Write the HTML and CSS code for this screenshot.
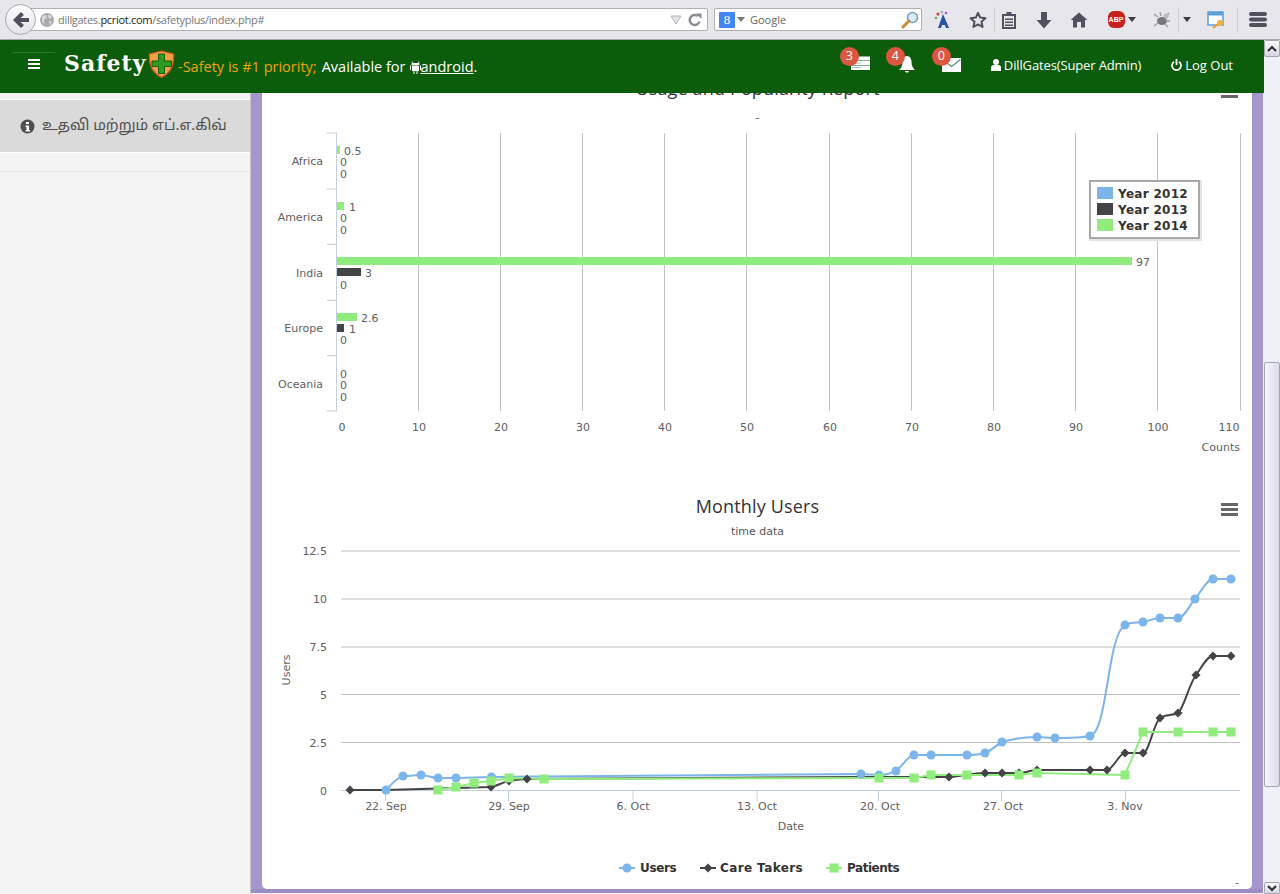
FILE: index.html
```html
<!DOCTYPE html>
<html lang="en">
<head>
<meta charset="utf-8">
<title>Safety Plus</title>
<link rel="stylesheet" href="styles.css">
</head>
<body>
<div class="toolbar">
  <div class="back">
    <svg width="20" height="20" viewBox="0 0 20 20"><path d="M10 2 L2 10 L10 18 L13 15 L9.5 12 H18 V8 H9.5 L13 5 Z" fill="#50505f"/></svg>
  </div>
  <div class="urlbar">
    <svg class="globe" width="16" height="16" viewBox="0 0 16 16"><circle cx="8" cy="8" r="7" fill="#a9a9ae"/><path d="M3 4 L7 3 L8 6 L5 8 L6 12 L3 10 Z M10 2 L13 5 L11 7 L9 5 Z M10 9 L13 9 L11 14 Z" fill="#d8d8dc"/></svg>
    <span class="url"><span class="url-dim">dillgates.</span>pcriot.com<span class="url-dim">/safetyplus/index.php#</span></span>
    <svg class="url-drop" width="12" height="10" viewBox="0 0 12 10"><path d="M1 1 H11 L6 9 Z" fill="#e4e4e8" stroke="#b4b4ba"/></svg>
    <svg class="url-reload" width="14" height="14" viewBox="0 0 14 14"><path d="M11.5 8.5 A5 5 0 1 1 10 3.2" fill="none" stroke="#8a8a94" stroke-width="2.4"/><path d="M8 0.5 L13.5 0.5 L13.5 6 Z" fill="#8a8a94"/></svg>
  </div>
  <div class="searchbar">
    <span class="g-icon">8</span>
    <svg width="8" height="5" viewBox="0 0 8 5"><path d="M0 0 H8 L4 5 Z" fill="#777"/></svg>
    <span class="search-text">Google</span>
    <svg class="lens" width="18" height="18" viewBox="0 0 18 18"><circle cx="11.5" cy="6.5" r="5" fill="#d9eefc" stroke="#7d9fbc" stroke-width="1.6"/><path d="M8 10 L2 16" stroke="#c98a3a" stroke-width="3" stroke-linecap="round"/></svg>
  </div>
  <div class="tools">
    <div class="tool"><svg width="20" height="20" viewBox="0 0 20 20"><path d="M10 4 L5 18 H8 L9 15 H12 L13 18 H16 Z" fill="#2a4fa8"/><circle cx="5" cy="4" r="1.6" fill="#c44"/><circle cx="3" cy="8" r="1.3" fill="#6a6"/><circle cx="9" cy="2" r="1.3" fill="#aaa"/><circle cx="13" cy="3" r="1.3" fill="#a5c"/></svg></div>
    <div class="tool"><svg width="18" height="18" viewBox="0 0 18 18"><path d="M9 1.8 L11.2 6.6 L16.4 7.2 L12.5 10.8 L13.6 16 L9 13.4 L4.4 16 L5.5 10.8 L1.6 7.2 L6.8 6.6 Z" fill="none" stroke="#50505f" stroke-width="2" stroke-linejoin="round"/></svg></div>
    <div class="tool-sep"></div>
    <div class="tool"><svg width="16" height="18" viewBox="0 0 16 18"><path d="M2 4 H14 V17 H2 Z" fill="none" stroke="#50505f" stroke-width="2"/><path d="M5.5 1 H10.5 V5 H5.5 Z M4 7.5 H12 V9 H4 Z M4 10.5 H12 V12 H4 Z M4 13.500 H12 V15 H4 Z" fill="#50505f"/></svg></div>
    <div class="tool"><svg width="16" height="18" viewBox="0 0 16 18"><path d="M5 1 H11 V9 H15.500 L8 17.500 L0.500 9 H5 Z" fill="#50505f"/></svg></div>
    <div class="tool"><svg width="18" height="16" viewBox="0 0 18 16"><path d="M9 0.500 L17.500 8 H15 V15.500 H11 V10 H7 V15.500 H3 V8 H0.500 Z" fill="#50505f"/></svg></div>
    <div class="tool tool-abp"><span class="abp">ABP</span><svg width="8" height="5" viewBox="0 0 8 5"><path d="M0 0 H8 L4 5 Z" fill="#3c3c44"/></svg></div>
    <div class="tool"><svg width="18" height="16" viewBox="0 0 18 16"><ellipse cx="9" cy="9" rx="5" ry="4" fill="#77777c"/><path d="M5 5 L1 2 M8 4 L7 0 M12 5 L16 1 M13 9 H17 M5 11 L1 14 M12 12 L15 15" stroke="#9c9ca2" stroke-width="1.400"/><circle cx="13" cy="4" r="2.500" fill="#bbb"/></svg></div>
    <div class="tool-gap"></div>
    <div class="tool-sep"></div>
    <div class="tool"><svg width="8" height="5" viewBox="0 0 8 5"><path d="M0 0 H8 L4 5 Z" fill="#3c3c44"/></svg></div>
    <div class="tool"><svg width="18" height="18" viewBox="0 0 18 18"><rect x="1" y="1" width="15" height="13" fill="#fff" stroke="#5a9fd8" stroke-width="1.500"/><rect x="1" y="1" width="15" height="3.500" fill="#5a9fd8"/><circle cx="13" cy="12" r="3" fill="#eeb23c"/><path d="M11 13 L6 17" stroke="#e2a02c" stroke-width="2"/></svg></div>
    <div class="tool-sep"></div>
    <div class="tool"><svg width="18" height="15" viewBox="0 0 18 15"><path d="M2 0 H16 Q18 0 18 2 Q18 4 16 4 H2 Q0 4 0 2 Q0 0 2 0 Z M2 5.500 H16 Q18 5.500 18 7.500 Q18 9.500 16 9.500 H2 Q0 9.500 0 7.500 Q0 5.500 2 5.500 Z M2 11 H16 Q18 11 18 13 Q18 15 16 15 H2 Q0 15 0 13 Q0 11 2 11 Z" fill="#50505f"/></svg></div>
  </div>
</div>

<div class="viewport">
  <div class="app">
    <header class="appbar">
      <button class="nav-toggle" type="button" aria-label="Menu"><span></span><span></span><span></span></button>
      <span class="brand">Safety</span>
      <svg class="shield" width="27" height="28" viewBox="0 0 27 28"><path d="M13.500 1 L25.500 4 C26.500 15 22 23 13.500 27.500 C5 23 0.500 15 1.500 4 Z" fill="#f0a03c" stroke="#d8502a" stroke-width="1.200"/><path d="M10.500 4 H16.500 V11 H23.500 V16.500 H16.500 V23.500 H10.500 V16.500 H4 V11 H10.500 Z" fill="#2f9a1e" stroke="#155f12"/></svg>
      <span class="tagline">-Safety is #1 priority;</span>
      <span class="avail">Available for</span>
      <svg class="android" width="11" height="14" viewBox="0 0 11 14"><path d="M2 1 L3 3 H8 L9 1 L9.500 5 H1.500 Z M0 5.500 H1 V10 H0 Z M10 5.500 H11 V10 H10 Z M2 5.500 H9 V11 H7.500 V14 H6.500 V11 H4.500 V14 H3.500 V11 H2 Z" fill="#fff"/></svg>
      <a class="android-link" href="#">android</a><span class="avail-dot">.</span>
      <nav class="app-actions">
        <div class="notice notice-tasks">
          <span class="badge">3</span>
          <svg width="19" height="14" viewBox="0 0 19 14"><path d="M0 9.500 H19 V14 H0 Z M1 5 H19 V9 H1 Z M3 0.500 H19 V4.500 H3 Z" fill="#fff"/><path d="M1 11.500 H10 M2 7 H10" stroke="#a9c4dc"/></svg>
        </div>
        <div class="notice notice-bell">
          <span class="badge">4</span>
          <svg width="18" height="18" viewBox="0 0 18 18"><path d="M9 1 C12 1 13.500 4 13.500 7 C13.500 11 15 13 17 15 H1 C3 13 4.500 11 4.500 7 C4.500 4 6 1 9 1 Z M7 16 H11 C11 18 7 18 7 16 Z" fill="#fff"/></svg>
        </div>
        <div class="notice notice-mail">
          <span class="badge">0</span>
          <svg width="19" height="14" viewBox="0 0 19 14"><path d="M0 0 H19 V14 H0 Z" fill="#fff"/><path d="M0.500 1.500 L9.500 8.500 L18.500 1.500" fill="none" stroke="#5d8f6a" stroke-width="1.200"/></svg>
        </div>
        <span class="account">
          <svg width="10" height="12" viewBox="0 0 10 12"><circle cx="5" cy="3" r="3" fill="#fff"/><path d="M0 12 V8.500 Q0 6 2.500 6 H7.500 Q10 6 10 8.500 V12 Z" fill="#fff"/></svg>
          DillGates(Super Admin)
        </span>
        <span class="logout">
          <svg width="11" height="12" viewBox="0 0 11 12"><path d="M3 2.800 A4.500 4.500 0 1 0 8 2.800" fill="none" stroke="#fff" stroke-width="1.800"/><path d="M5.500 0 V6" stroke="#fff" stroke-width="1.800"/></svg>
          Log Out
        </span>
      </nav>
    </header>

    <div class="workspace">
      <aside class="sidebar">
        <div class="side-item">
          <svg width="15" height="15" viewBox="0 0 15 15"><circle cx="7.500" cy="7.500" r="7" fill="#4f4f4f"/><path d="M6 3 H9 V5 H6 Z M5.500 6.500 H9 V11 H10 V12.500 H5.500 V11 H6.500 V8 H5.500 Z" fill="#fff"/></svg>
          <span>உதவி மற்றும் எப்.எ.கிவ்</span>
        </div>
        <div class="side-rest"></div>
      </aside>

      <main class="panel">
        <div class="card">
          <svg class="chart chart-bar" viewBox="262 93 990 397" width="990" height="397">
            <text class="c-title" x="757.500" y="95">Usage and Popularity Report</text>
            <text class="c-sub" x="757.500" y="121">-</text>
            <path class="c-menu" d="M1221 95 H1238 V98 H1221 Z"/>
            <path class="c-grid" d="M418.500 133 V411 M500.500 133 V411 M582.500 133 V411 M664.500 133 V411 M746.500 133 V411 M829.500 133 V411 M911.500 133 V411 M993.500 133 V411 M1075.500 133 V411 M1157.500 133 V411 M1240.500 133 V411"/>
            <path class="c-axis" d="M336.500 133 V411 M327 133 H337 M327 189 H337 M327 244.500 H337 M327 300.500 H337 M327 355.500 H337 M327 411 H337"/>
            <rect class="s-green" x="337" y="146" width="3" height="8"/>
            <rect class="s-green" x="337" y="202" width="7" height="8"/>
            <rect class="s-green" x="337" y="257" width="795" height="8"/>
            <rect class="s-dark" x="337" y="268" width="24" height="8"/>
            <rect class="s-green" x="337" y="313" width="20" height="8"/>
            <rect class="s-dark" x="337" y="324" width="7" height="8"/>
            <g class="c-label">
              <text x="344" y="155">0.5</text><text x="340" y="166">0</text><text x="340" y="178">0</text>
              <text x="349" y="211">1</text><text x="340" y="222">0</text><text x="340" y="234">0</text>
              <text x="1136" y="266">97</text><text x="365" y="277">3</text><text x="340" y="289">0</text>
              <text x="361" y="322">2.6</text><text x="349" y="333">1</text><text x="340" y="344">0</text>
              <text x="340" y="378">0</text><text x="340" y="389">0</text><text x="340" y="401">0</text>
            </g>
            <g class="c-label c-end">
              <text x="323" y="165">Africa</text><text x="323" y="221">America</text><text x="323" y="277">India</text><text x="323" y="332">Europe</text><text x="323" y="388">Oceania</text>
              <text x="1240" y="451">Counts</text>
            </g>
            <g class="c-label c-mid">
              <text x="342" y="431">0</text><text x="419" y="431">10</text><text x="501" y="431">20</text><text x="583" y="431">30</text><text x="665" y="431">40</text><text x="747" y="431">50</text><text x="830" y="431">60</text><text x="912" y="431">70</text><text x="994" y="431">80</text><text x="1076" y="431">90</text><text x="1158" y="431">100</text><text x="1229" y="431">110</text>
            </g>
            <rect class="lg-shadow" x="1089" y="180" width="113" height="61"/>
            <rect class="lg-box" x="1090" y="181" width="109" height="57"/>
            <rect class="s-blue" x="1097" y="187" width="16" height="12"/>
            <rect class="s-dark" x="1097" y="203" width="16" height="12"/>
            <rect class="s-green" x="1097" y="219" width="16" height="12"/>
            <g class="c-legend">
              <text x="1118" y="198">Year 2012</text><text x="1118" y="214">Year 2013</text><text x="1118" y="230">Year 2014</text>
            </g>
          </svg>
          <svg class="chart chart-line" viewBox="262 490 990 399" width="990" height="399">
            <defs>
              <circle id="m-c" r="4.500" class="s-blue"/>
              <path id="m-d" d="M0 -4.500 L4.500 0 L0 4.500 L-4.500 0 Z" class="s-dark"/>
              <rect id="m-s" x="-4.500" y="-4.500" width="9" height="9" class="s-green"/>
            </defs>
            <text class="c-title" x="757.500" y="513">Monthly Users</text>
            <text class="c-sub" x="757.500" y="535">time data</text>
            <path class="c-menu" d="M1221 503 H1238 V506 H1221 Z M1221 508 H1238 V511 H1221 Z M1221 513 H1238 V516 H1221 Z"/>
            <path class="c-grid" d="M341 551 H1240 M341 599 H1240 M341 647 H1240 M341 694.500 H1240 M341 742.500 H1240"/>
            <path class="c-axis" d="M341 790.500 H1240 M385.500 791 V801 M508.500 791 V801 M633 791 V801 M757 791 V801 M878.500 791 V801 M1001.500 791 V801 M1125.500 791 V801"/>
            <g class="c-label c-end">
              <text x="327" y="555">12.5</text><text x="327" y="603">10</text><text x="327" y="651">7.5</text><text x="327" y="699">5</text><text x="327" y="747">2.5</text><text x="327" y="795">0</text>
            </g>
            <text class="c-label c-mid" transform="translate(290 670) rotate(-90)">Users</text>
            <g class="c-label c-mid">
              <text x="386" y="810">22. Sep</text><text x="509" y="810">29. Sep</text><text x="633" y="810">6. Oct</text><text x="757" y="810">13. Oct</text><text x="880" y="810">20. Oct</text><text x="1003" y="810">27. Oct</text><text x="1125" y="810">3. Nov</text>
              <text x="791" y="830">Date</text>
            </g>
            <path class="l-blue" d="M386 790 C392 784 397 777 403 776.500 C409 776 415 775 421 775 C427 775 432 778 438 778 L456 778 L491.500 777 L861 774 L879 775 C885 775 890 774 896 771 C902 767 908 755 914 755 L967 755 C973 755 979 755 985 753 C991 751 996 745 1002 742 C1012 739 1027 737 1037 737 C1043 737 1049 738 1055 738 C1065 738 1080 738 1090 736 C1108 732 1107 635 1125 625 C1131 622 1137 623 1143 622 C1149 621 1154 618 1160 618 L1178 618 C1184 618 1189 606 1195 599 C1201 592 1207 579 1213 579 L1231 579"/>
            <path class="l-dark" d="M350 790 L386 790 L491 787 C497 786 503 782 509 781 C515 780 521 779 527 779 L861 777 L949 777 C960 776 975 773 985 773 L1019 773 C1025 773 1031 770 1037 770 L1107 770 C1113 770 1119 753 1125 753 L1143 753 C1149 753 1154 722 1160 718 C1166 714 1172 716 1178 713 C1184 708 1189 684 1196 675 C1202 667 1207 656 1213 656 L1231 656"/>
            <path class="l-green" d="M438 790 L456 787 L474 783 L491 781 L509 778 L544 779 L879 778 L914 778 L931 775 L967 775 L1019 775 L1037 773 L1125 775 L1143 732 L1231 732"/>
            <g>
              <use href="#m-c" x="386" y="790"/><use href="#m-c" x="403" y="776"/><use href="#m-c" x="421" y="775"/><use href="#m-c" x="438" y="778"/><use href="#m-c" x="456" y="778"/><use href="#m-c" x="491.500" y="777"/><use href="#m-c" x="861" y="774"/><use href="#m-c" x="879" y="775"/><use href="#m-c" x="896" y="771"/><use href="#m-c" x="914" y="755"/><use href="#m-c" x="931" y="755"/><use href="#m-c" x="967" y="755"/><use href="#m-c" x="985" y="753"/><use href="#m-c" x="1002" y="742"/><use href="#m-c" x="1037" y="737"/><use href="#m-c" x="1055" y="738"/><use href="#m-c" x="1090" y="736"/><use href="#m-c" x="1125" y="625"/><use href="#m-c" x="1143" y="622"/><use href="#m-c" x="1160" y="618"/><use href="#m-c" x="1178" y="618"/><use href="#m-c" x="1195" y="599"/><use href="#m-c" x="1213" y="579"/><use href="#m-c" x="1231" y="579"/>
            </g>
            <g>
              <use href="#m-d" x="350" y="790"/><use href="#m-d" x="491" y="787"/><use href="#m-d" x="509" y="781"/><use href="#m-d" x="527" y="779"/><use href="#m-d" x="949" y="777"/><use href="#m-d" x="985" y="773"/><use href="#m-d" x="1002" y="773"/><use href="#m-d" x="1019" y="773"/><use href="#m-d" x="1037" y="770"/><use href="#m-d" x="1090" y="770"/><use href="#m-d" x="1107" y="770"/><use href="#m-d" x="1125" y="753"/><use href="#m-d" x="1143" y="753"/><use href="#m-d" x="1160" y="718"/><use href="#m-d" x="1178" y="713"/><use href="#m-d" x="1196" y="675"/><use href="#m-d" x="1213" y="656"/><use href="#m-d" x="1231" y="656"/>
            </g>
            <g>
              <use href="#m-s" x="438" y="790"/><use href="#m-s" x="456" y="787"/><use href="#m-s" x="474" y="783"/><use href="#m-s" x="491" y="781"/><use href="#m-s" x="509" y="778"/><use href="#m-s" x="544" y="779"/><use href="#m-s" x="879" y="778"/><use href="#m-s" x="914" y="778"/><use href="#m-s" x="931" y="775"/><use href="#m-s" x="967" y="775"/><use href="#m-s" x="1019" y="775"/><use href="#m-s" x="1037" y="773"/><use href="#m-s" x="1125" y="775"/><use href="#m-s" x="1143" y="732"/><use href="#m-s" x="1178" y="732"/><use href="#m-s" x="1213" y="732"/><use href="#m-s" x="1231" y="732"/>
            </g>
            <path class="l-blue" d="M619 868 H635"/><use href="#m-c" x="627" y="868"/>
            <path class="l-dark" d="M700 868 H716"/><use href="#m-d" x="708" y="868"/>
            <path class="l-green" d="M826 868 H842"/><use href="#m-s" x="834" y="868"/>
            <g class="c-legend">
              <text x="640" y="872" textLength="37">Users</text><text x="720" y="872" textLength="83">Care Takers</text><text x="847" y="872" textLength="53">Patients</text>
            </g>
            <text class="c-label c-mid" x="1237" y="886">-</text>
          </svg>
        </div>
      </main>
    </div>
  </div>

  <div class="scrollbar">
    <div class="sb-btn"><svg width="10" height="7" viewBox="0 0 10 7"><path d="M1 6 L5 2 L9 6" fill="none" stroke="#333" stroke-width="2.200"/></svg></div>
    <div class="sb-track-top"></div>
    <div class="sb-thumb"></div>
    <div class="sb-track-bottom"></div>
    <div class="sb-btn sb-btn-down"><svg width="10" height="7" viewBox="0 0 10 7"><path d="M1 1 L5 5 L9 1" fill="none" stroke="#333" stroke-width="2.200"/></svg></div>
  </div>
</div>
</body>
</html>
```

FILE: styles.css
```css
* { box-sizing: border-box; }
html, body { margin: 0; height: 100%; overflow: hidden; }
body { display: flex; flex-direction: column; height: 894px; font-family: "Open Sans", "Liberation Sans", sans-serif; background: #fff; }

/* browser chrome */
.toolbar { display: flex; align-items: center; height: 40px; flex: none; background: #e6e6eb; border-bottom: 1px solid #a9a9ad; padding-left: 5px; }
.back { position: relative; z-index: 1; width: 31px; height: 31px; flex: none; display: flex; align-items: center; justify-content: center; border-radius: 50%; background: linear-gradient(#fdfdfd, #e4e4ea); border: 1px solid #a8a8b4; }
.urlbar { display: flex; align-items: center; width: 684px; height: 23px; margin-left: -12px; padding-left: 14px; background: #fff; border: 1px solid #b0b0b4; border-radius: 0 2px 2px 0; flex: none; }
.globe { flex: none; }
.url { margin-left: 3px; font-size: 11px; color: #222; letter-spacing: -0.300px; flex: 1; }
.url-dim { color: #777; }
.url-drop { margin-right: 6px; }
.url-reload { margin-right: 5px; }
.searchbar { display: flex; align-items: center; width: 208px; height: 23px; margin-left: 6px; padding-left: 4px; background: #fff; border: 1px solid #b0b0b4; border-radius: 2px; flex: none; }
.g-icon { width: 16px; height: 16px; margin-right: 2px; background: #4285f4; color: #fff; font: 13px/16px "Liberation Serif", serif; text-align: center; border-radius: 1px; }
.search-text { margin-left: 5px; flex: 1; font-size: 11px; color: #666; }
.lens { margin-right: 2px; }
.tools { display: grid; grid-template-columns: 36px 33px 1px 28px 42px 28px 57px 24px 4px 1px 16px 42px 1px 40px; margin-left: 3px; height: 30px; align-items: center; }
.tool { display: flex; align-items: center; justify-content: center; }
.tool-abp { gap: 3px; }
.tool-sep { width: 1px; height: 26px; background: #cfcfd4; }
.abp { width: 17px; height: 17px; border-radius: 6px; background: #c8201c; color: #fff; font: bold 7px/17px "Liberation Sans", sans-serif; text-align: center; }

/* application */
.viewport { flex: 1; min-height: 0; display: flex; }
.app { flex: 1; min-width: 0; display: flex; flex-direction: column; }
.appbar { display: flex; align-items: center; height: 53px; flex: none; background: #0b5c0b; color: #fff; font-size: 14.500px; padding-right: 31px; }
.nav-toggle { display: flex; flex-direction: column; gap: 2px; align-items: center; width: 46px; height: 20px; margin: 0 0 10px 11px; padding: 6px 0 0; background: none; border: 0; border-top: 1px solid #2c7a2c; border-radius: 4px 4px 0 0; }
.nav-toggle span { display: block; width: 12px; height: 2px; background: #fff; }
.brand { margin-left: 7px; width: 85px; font: bold 22px/26px "DejaVu Serif", serif; letter-spacing: 1px; margin-top: -8px; }
.shield { margin-top: -5px; flex: none; margin-left: -1px; }
.tagline { margin-left: 3px; color: #f0a30a; }
.avail { margin-left: 5px; }
.android { margin-left: 4px; }
.android-link { color: #fff; }
.app-actions { margin-left: auto; display: flex; align-items: center; font-size: 13px; }
.notice { position: relative; display: flex; height: 26px; margin-bottom: 13px; padding-bottom: 3px; align-items: flex-end; }
.notice-tasks { width: 46px; padding-left: 11px; }
.notice-bell { width: 46px; padding-left: 12px; padding-bottom: 0; }
.notice-mail { width: 49px; padding-left: 10px; padding-bottom: 1px; }
.badge { position: absolute; z-index: 1; top: 0; left: 0; width: 19px; height: 19px; border-radius: 50%; background: #dc5640; color: #fff; font-size: 12.500px; line-height: 18px; text-align: center; }
.account { display: flex; align-items: center; gap: 3px; margin: 0 0 3px 10px; letter-spacing: -0.130px; }
.logout { display: flex; align-items: center; gap: 3px; margin: 0 0 3px 30px; }

.workspace { flex: 1; min-height: 0; display: flex; }
.sidebar { width: 251px; flex: none; display: flex; flex-direction: column; padding-top: 6px; background: #f3f3f3; border-right: 1px solid #c9c9c9; }
.side-item { display: flex; align-items: center; gap: 7px; height: 54px; padding-left: 20px; background: #dadada; border-top: 1px solid #fff; border-bottom: 1px solid #fff; color: #505050; font-size: 14.800px; font-family: "Noto Sans Tamil", "Noto Sans", "Lohit Tamil", "Open Sans", sans-serif; }
.side-rest { height: 19px; border-bottom: 1px solid #e6e6e6; }

.panel { flex: 1; min-width: 0; display: flex; background: #a597cd; padding: 0 11px 4px; border-right: 1px solid #f2f2f7; border-bottom: 1px solid #f2f2f7; box-shadow: inset 0 -4px 0 #9c8cc4; }
.card { flex: 1; min-width: 0; background: #fff; border-radius: 0 0 5px 5px; overflow: hidden; }
.chart { display: block; font-family: "DejaVu Sans", sans-serif; }
.c-title { font: 18px "Open Sans", sans-serif; fill: #333; text-anchor: middle; letter-spacing: 0.150px; }
.c-sub { font-size: 11px; fill: #555; text-anchor: middle; }
.c-menu { fill: #666; }
.c-grid { fill: none; stroke: #c0c0c0; stroke-width: 1; }
.c-axis { fill: none; stroke: #c0d0e0; stroke-width: 1; }
.c-label { font-size: 11px; fill: #606060; }
.c-end { text-anchor: end; }
.c-mid { text-anchor: middle; }
.c-legend { font-size: 12px; font-weight: bold; fill: #333; letter-spacing: 0.300px; }
.s-blue { fill: #7cb5ec; }
.s-dark { fill: #434348; }
.s-green { fill: #90ed7d; }
.l-blue, .l-dark, .l-green { fill: none; stroke-width: 2; }
.l-blue { stroke: #7cb5ec; }
.l-dark { stroke: #434348; }
.l-green { stroke: #90ed7d; }
.lg-shadow { fill: #e4e4e4; }
.lg-box { fill: #fff; stroke: #909090; stroke-width: 1.500; }

.scrollbar { width: 16px; flex: none; display: flex; flex-direction: column; background: #f0f0f7; }
.sb-btn { height: 17px; flex: none; display: flex; align-items: center; justify-content: center; background: linear-gradient(#fbfbfd, #d6d6e0); border: 1px solid #a4a4b4; border-radius: 2px; }
.sb-btn-down { height: 12px; }
.sb-track-top { height: 305px; flex: none; }
.sb-thumb { height: 425px; flex: none; background: linear-gradient(90deg, #f6f6fa, #dcdce6); border: 1px solid #a4a4b4; border-radius: 2px; }
.sb-track-bottom { flex: 1; }
```
